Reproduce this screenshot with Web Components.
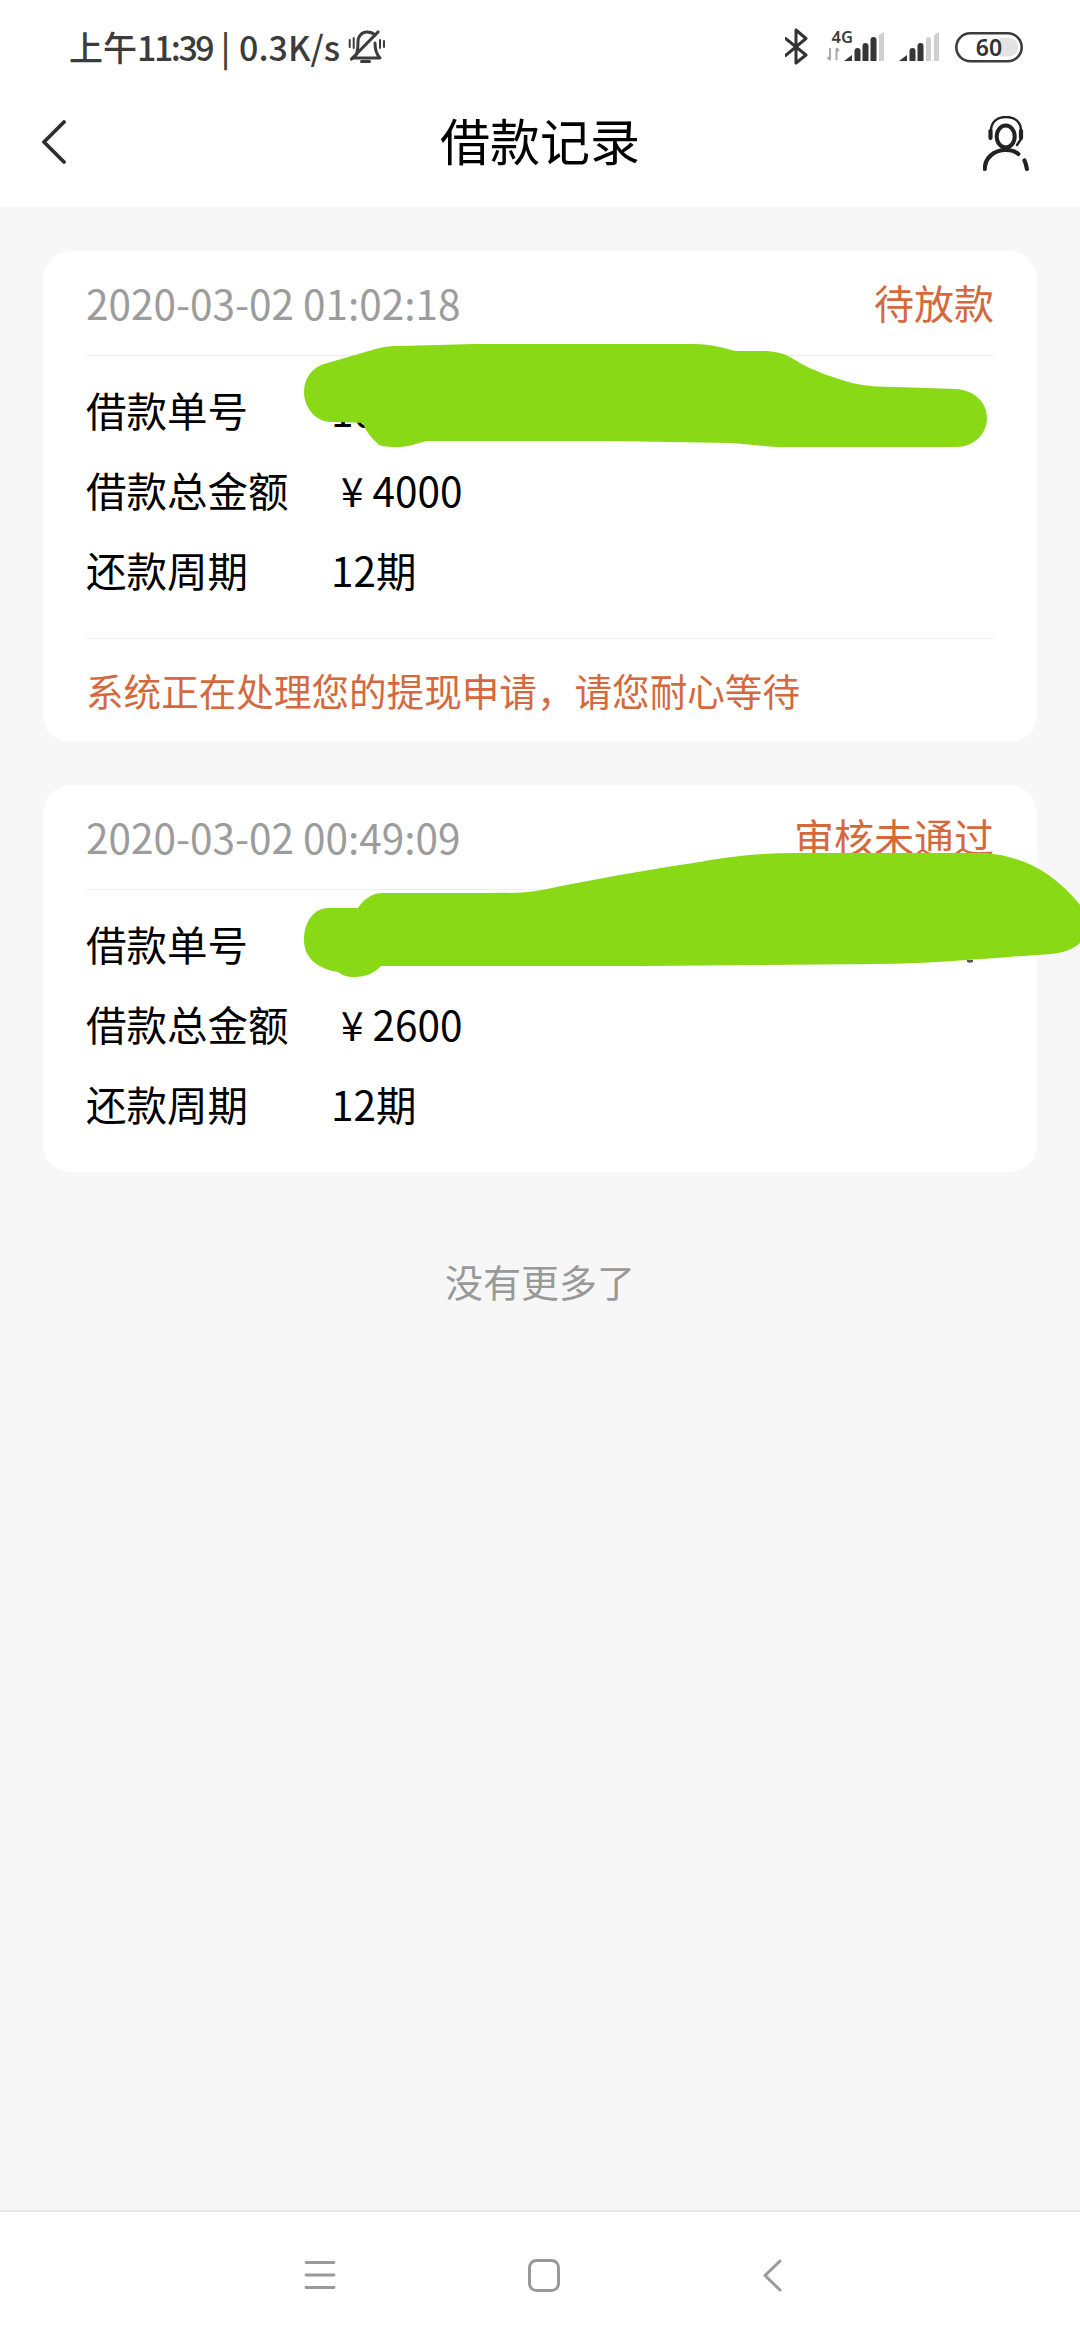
<!DOCTYPE html>
<html lang="zh-CN">
<head>
<meta charset="utf-8">
<title>借款记录</title>
<style>
html,body{margin:0;padding:0;background:#f7f7f7}
body{width:1080px;height:2340px;font-family:"Noto Sans CJK SC","Noto Sans",sans-serif;overflow:hidden}
.yen{margin:0 9px 0 10px}
</style>
</head>
<body>
<app-screen>
  <status-bar slot="top" ampm="上午" time="11:39" speed="0.3K/s"></status-bar>
  <app-header slot="top">借款记录</app-header>

  <loan-card>
    <span slot="date">2020-03-02 01:02:18</span>
    <span slot="status">待放款</span>
    <info-row label="借款单号">10</info-row>
    <info-row label="借款总金额"><span class="yen">¥</span>4000</info-row>
    <info-row label="还款周期">12期</info-row>
    <span slot="note">系统正在处理您的提现申请，请您耐心等待</span>
  </loan-card>

  <loan-card>
    <span slot="date">2020-03-02 00:49:09</span>
    <span slot="status">审核未通过</span>
    <info-row label="借款单号"></info-row>
    <info-row label="借款总金额"><span class="yen">¥</span>2600</info-row>
    <info-row label="还款周期">12期</info-row>
  </loan-card>

  <list-end>没有更多了</list-end>

  <nav-buttons slot="bottom"></nav-buttons>
  <scribble-mask slot="over"></scribble-mask>
</app-screen>

<script>
function def(name, html, init){
  customElements.define(name, class extends HTMLElement{
    constructor(){
      super();
      this.attachShadow({mode:'open'}).innerHTML = html;
    }
    connectedCallback(){ if(init) init(this, this.shadowRoot); }
  });
}

def('app-screen', `<style>
  :host{display:flex;flex-direction:column;position:relative;width:1080px;height:2340px;background:#f7f7f7}
  .top{background:#fff;flex:none}
  main{flex:1;padding-top:44px;display:flex;flex-direction:column;gap:43px}
  .bottom{flex:none}
</style>
<div class="top"><slot name="top"></slot></div>
<main><slot></slot></main>
<div class="bottom"><slot name="bottom"></slot></div>
<slot name="over"></slot>`);

def('status-bar', `<style>
  :host{display:flex;align-items:center;height:94px;padding:0 57px 0 69px;color:#3c3c3c;font-size:34px;line-height:1;font-weight:500}
  .time{letter-spacing:-2.500px}
  .sep{white-space:pre;word-spacing:1px}
  .bell{margin-left:8px;flex:none}
  .r{margin-left:auto;display:flex;align-items:center;flex:none}
  svg{display:block}
  text{font-family:"Noto Sans","Noto Sans CJK SC",sans-serif}
</style>
<span class="ampm"></span><span class="time"></span><span class="sep"> | </span><span class="speed"></span>
<svg class="bell" width="38" height="45" viewBox="0 0 38 45" fill="none" stroke="#3c3c3c" stroke-linecap="round" stroke-linejoin="round">
  <path d="M8 30c1.500-3 2-7 2-13 0-6 4-10 9-10 3 0 6 1 8 3M27 18c0 6 1 11 5 15H5" stroke-width="3"/>
  <path d="M13.500 36.500h8" stroke-width="3"/>
  <path d="M3.500 34 30 7" stroke-width="3.200"/>
  <path d="M1.700 15v7M5.700 13v10M32 15v8M36 16v6" stroke-width="2"/>
</svg>
<div class="r">
  <svg width="238" height="45" viewBox="785 25 238 45">
    <path d="M785.500 38.500 806 55 796 63V30l10 8.500L785.500 55.500" fill="none" stroke="#333" stroke-width="3" stroke-linejoin="round" stroke-linecap="round"/>
    <text x="831.500" y="42.500" font-size="16.500" font-weight="600" fill="#3c3c3c">4G</text>
    <path d="M830 48v12M827.500 57l2.500 3M836.500 60V48M836.500 48l2.500 3" stroke="#aaa" stroke-width="2" fill="none"/>
    <path d="M844 61l8-6v6zM854.500 51q0-3 3-3t3 3v10h-6zM862.500 46q0-3 3-3t3 3v15h-6zM870.500 40q0-3 3-3t3 3v21h-6z" fill="#363636"/>
    <path d="M879 35l5-3v29h-5z" fill="#cfcfcf"/>
    <path d="M899 61l8-6v6zM909.500 51q0-3 3-3t3 3v10h-6zM917.500 46q0-3 3-3t3 3v15h-6z" fill="#363636"/>
    <path d="M926 40q0-3 2.500-3t2.500 3v21h-5zM934 35l5-3v29h-5z" fill="#cfcfcf"/>
    <rect x="956.300" y="33.300" width="65.400" height="28" rx="14" fill="#fff" stroke="#3c3c3c" stroke-width="2.600"/>
    <path d="M1000 38h9a9.300 9.300 0 0 1 0 18.600h-9z" fill="#e3e3e3"/>
    <text x="989" y="56" font-size="23" font-weight="600" fill="#333" text-anchor="middle">60</text>
  </svg>
</div>`, (el, s)=>{
  s.querySelector('.ampm').textContent = el.getAttribute('ampm');
  s.querySelector('.time').textContent = el.getAttribute('time');
  s.querySelector('.speed').textContent = el.getAttribute('speed');
});

def('app-header', `<style>
  :host{display:grid;grid-template-columns:1fr auto 1fr;align-items:center;height:113px;padding:0 42px 20px;box-sizing:border-box;color:#000;font-size:50px;line-height:1}
  .title{margin-bottom:3px}
  .back{justify-self:start;margin-top:2px}
  .cs{justify-self:end;margin:7px 9px 0 0}
  svg{display:block}
</style>
<svg class="back" width="24" height="44" viewBox="0 0 24 44" fill="none" stroke="#2e2e2e" stroke-width="3.800" stroke-linecap="round" stroke-linejoin="round"><path d="M22 2 2 22l20 20"/></svg>
<span class="title"><slot></slot></span>
<svg class="cs" width="46" height="56" viewBox="983 117 46 56" fill="none" stroke="#222" stroke-linecap="round">
  <path d="M991 132c0-9 6-14 15-14s15 5 15 14" stroke-width="2.400"/>
  <ellipse cx="1005.700" cy="137.500" rx="9" ry="11" stroke-width="4"/>
  <path d="M990.500 132v7M1021 132v7" stroke-width="4.200"/>
  <path d="M1021 140l-4 6" stroke-width="2.400"/>
  <path d="M984.800 170c0-11 9-19 21-19 5 0 9 1 12.500 4" stroke-width="4.200"/>
  <path d="M1024.500 161.500c1.200 2.800 2 5.500 2.400 8.500" stroke-width="4.200"/>
</svg>`);

def('loan-card', `<style>
  :host{display:block;margin:0 43px;padding:0 43px;background:#fff;border-radius:28px;flex:none}
  .head{display:flex;justify-content:space-between;align-items:center;height:102px;padding-bottom:2px;border-bottom:1px solid #eee;font-size:40px;line-height:1;margin-bottom:-1px}
  .date{color:#9c9c9c;white-space:nowrap;font-size:40.500px;margin-top:2px}
  .status{color:#d4693e;white-space:nowrap}
  .body{padding:15px 0 28px}
  .note ::slotted(*){display:block;border-top:1px solid #eee;padding:31px 0 32px;line-height:40px;color:#d4693e;font-size:37.600px;white-space:nowrap}
</style>
<div class="head"><span class="date"><slot name="date"></slot></span><span class="status"><slot name="status"></slot></span></div>
<div class="body"><slot></slot></div>
<div class="note"><slot name="note"></slot></div>`);

def('info-row', `<style>
  :host{display:grid;grid-template-columns:245px 1fr;align-items:center;height:80px;color:#000;font-size:40.500px;line-height:1;white-space:nowrap}
</style>
<span class="l"></span><span class="v"><slot></slot></span>`, (el, s)=>{ s.querySelector('.l').textContent = el.getAttribute('label'); });

def('list-end', `<style>
  :host{display:block;text-align:center;color:#999;font-size:38px;line-height:1;padding-top:47px}
</style><slot></slot>`);

def('nav-buttons', `<style>
  :host{display:flex;align-items:center;height:130px;box-sizing:border-box;padding:0 0 2px 304px;background:#fff;border-top:2px solid #e6e6e6}
  svg{display:block;flex:none}
  .sq{margin-left:192px}
  .bk{margin-left:203px}
</style>
<svg width="32" height="32" viewBox="0 0 32 32" stroke="#999" stroke-width="2.800" stroke-linecap="round" fill="none"><path d="M2 3.500h28M2 16h28M2 28.500h28"/></svg>
<svg class="sq" width="32" height="33" viewBox="0 0 32 33" fill="none" stroke="#999" stroke-width="3"><rect x="1.500" y="1.500" width="29" height="30" rx="7"/></svg>
<svg class="bk" width="19" height="33" viewBox="0 0 19 33" fill="none" stroke="#999" stroke-width="3" stroke-linecap="round" stroke-linejoin="round"><path d="M17 2 2 16.500 17 31"/></svg>`);

def('scribble-mask', `<style>
  :host{position:absolute;left:0;top:0;width:1080px;height:2340px;pointer-events:none}
  svg{display:block}
</style>
<svg width="1080" height="2340" viewBox="0 0 1080 2340" fill="#8ad917">
  <path d="M304 392C304 378 312 368 324 364L372 350C385 346 392 346 400 346L474 344L694 344C712 344 724 348 735 351L767 351C780 352 788 355 795 360C812 371 838 379 852 383C866 386 880 387 896 387L956 389C974 390 987 402 987 418C987 434 974 447 956 447L777 447C760 446 748 444 731 443L611 441L428 441C416 443 410 447 398 447C385 447 379 446 377 443C370 436 365 430 363 423C352 422 342 422 331 422C316 422 304 408 304 392Z"/>
  <path d="M304 940C304 922 314 908 328 908L358 908C364 899 372 893 383 893L491 893C510 893 525 893 542 890C590 880 640 871 693 863C730 856 762 853 794 853L985 853C1020 856 1052 870 1080 905L1080 943C1072 950 1062 953 1051 954C990 958 930 964 879 964L643 966L381 966C374 973 366 977 355 977C347 977 342 975 338 972C318 969 304 958 304 940Z"/>
  <path d="M967 960h6v2q-3 1.500-6 0z" fill="#555"/>
</svg>`);

</script>
</body>
</html>
